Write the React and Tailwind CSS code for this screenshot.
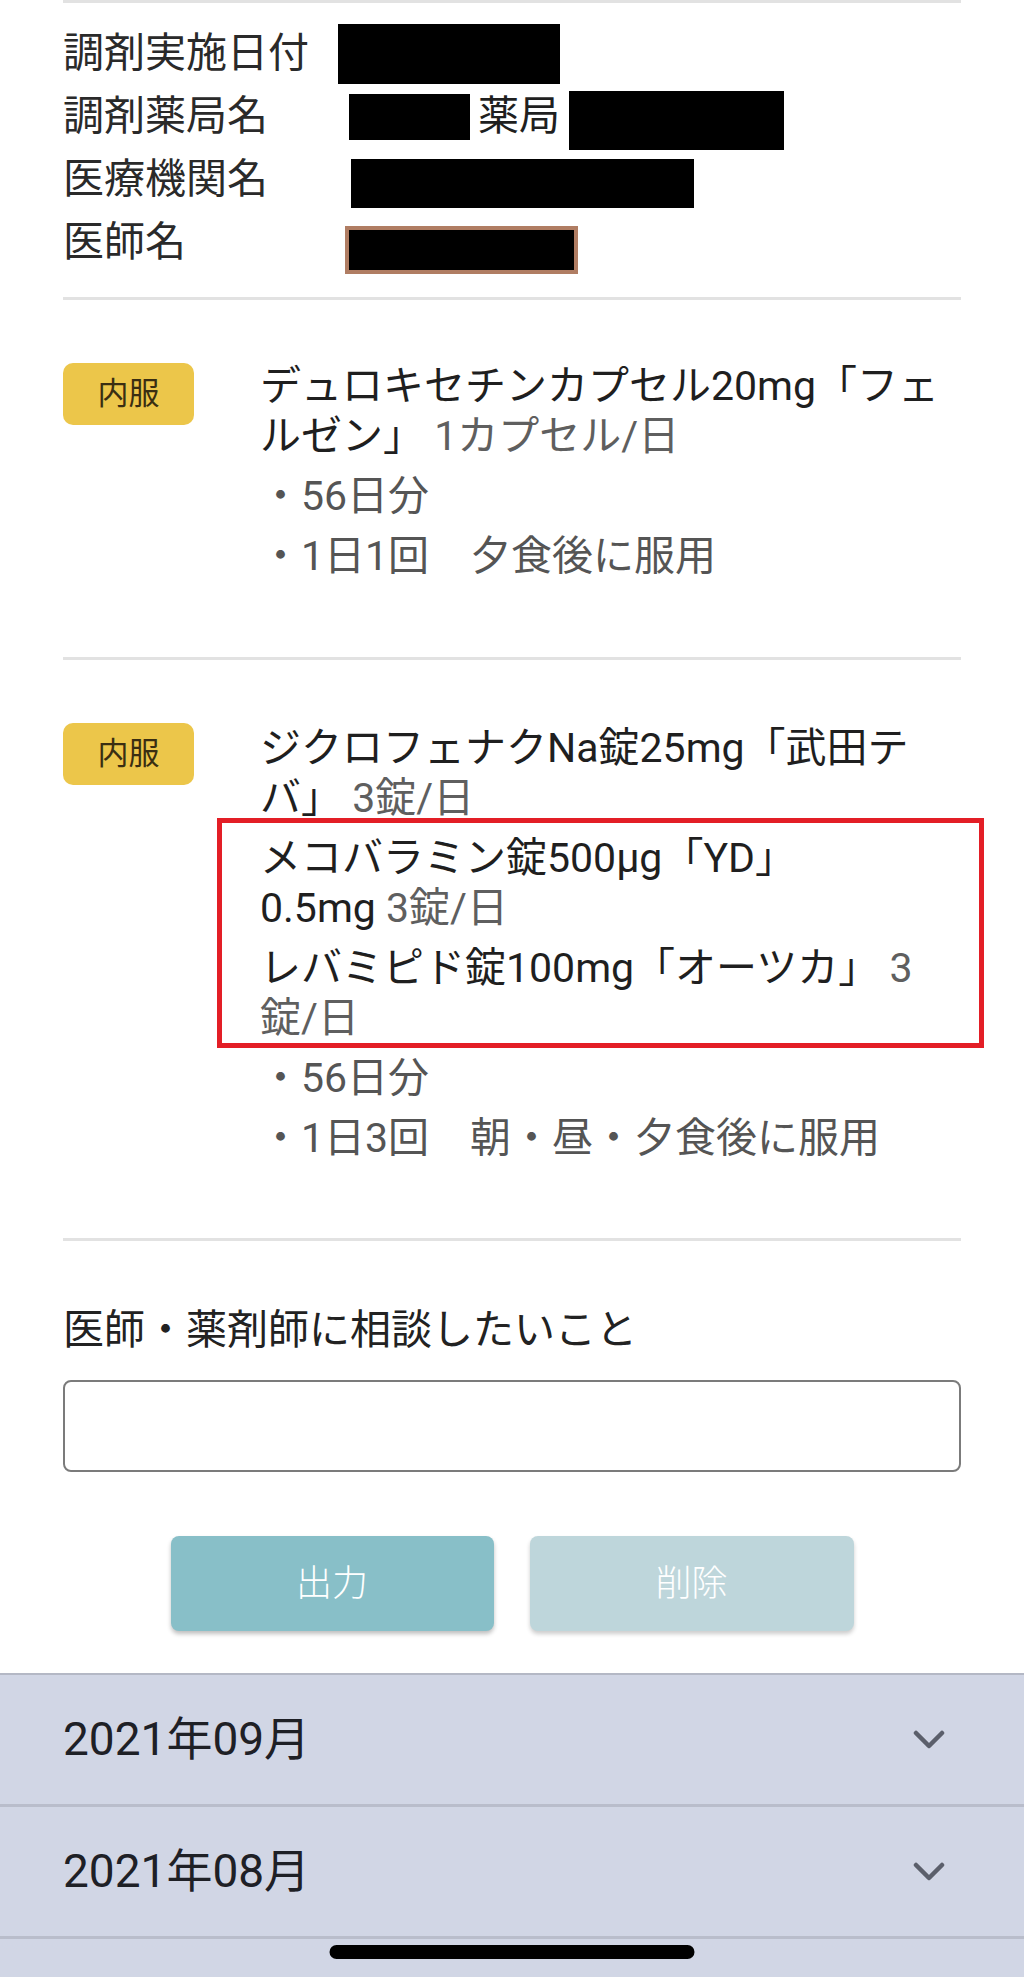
import React from "react";

const Redact = ({ className = "" }) => <span className={`block shrink-0 bg-black ${className}`} />;

const InfoRow = ({ label, children }) => (
  <div className="flex h-[63px] items-center">
    <div className="w-[286px] shrink-0 text-[#2a2a2a]">{label}</div>
    <div className="flex items-center">{children}</div>
  </div>
);

const Badge = () => (
  <div className="flex h-[62px] w-[131px] shrink-0 items-center justify-center rounded-[10px] bg-[#ecc64a] text-[31px] text-[#3a2e12]">
    内服
  </div>
);

const Dose = ({ children }) => <span className="text-[#5f5f5f]">{children}</span>;

const Bullet = ({ children }) => <p className="whitespace-nowrap text-[#555555]">・{children}</p>;

const Chevron = () => (
  <svg width="32" height="20" viewBox="0 0 32 20" fill="none">
    <polyline points="3,3 16,16 29,3" stroke="#5b5f6b" strokeWidth="4.5" strokeLinecap="round" strokeLinejoin="round" />
  </svg>
);

export default function App() {
  return (
    <div className="relative min-h-[1977px] w-[1024px] overflow-hidden bg-white font-['Roboto','Noto_Sans_CJK_JP',sans-serif] text-[41px] text-[#1f1f1f]">
      <div className="px-[63px]">
        {/* dispensing info */}
        <section className="border-t-[3px] border-[#e2e2e2] pb-[23px] pt-[19px]">
          <InfoRow label="調剤実施日付">
            <Redact className="-ml-[11px] h-[60px] w-[222px]" />
          </InfoRow>
          <InfoRow label="調剤薬局名">
            <Redact className="h-[46px] w-[121px]" />
            <span className="ml-[8px]">薬局</span>
            <Redact className="ml-[9px] mt-[7px] h-[59px] w-[215px]" />
          </InfoRow>
          <InfoRow label="医療機関名">
            <Redact className="ml-[2px] mt-[7px] h-[49px] w-[343px]" />
          </InfoRow>
          <InfoRow label="医師名">
            <span className="-ml-[4px] mt-[14px] block h-[48px] w-[233px] border-4 border-[#b07d63] bg-black" />
          </InfoRow>
        </section>

        {/* medicine 1 */}
        <section className="flex border-t-[3px] border-[#e2e2e2] pb-[76px] pt-[61px]">
          <div className="mt-[2px]">
            <Badge />
          </div>
          <div className="ml-[66px] flex flex-1 flex-col gap-[10px] leading-[50px]">
            <p className="whitespace-nowrap">
              デュロキセチンカプセル20mg「フェ
              <br />
              ルゼン」 <Dose>1カプセル/日</Dose>
            </p>
            <Bullet>56日分</Bullet>
            <Bullet>1日1回　夕食後に服用</Bullet>
          </div>
        </section>

        {/* medicine 2 */}
        <section className="flex border-t-[3px] border-[#e2e2e2] pb-[75px] pt-[63px]">
          <Badge />
          <div className="ml-[66px] flex flex-1 flex-col gap-[10px] leading-[50px]">
            <p className="whitespace-nowrap">
              ジクロフェナクNa錠25mg「武田テ
              <br />
              バ」 <Dose>3錠/日</Dose>
            </p>
            <div className="relative flex flex-col gap-[10px]">
              <div className="pointer-events-none absolute -bottom-[5px] -left-[43px] -right-[23px] -top-[15px] border-[5px] border-[#e31e26]" />
              <p className="whitespace-nowrap">
                メコバラミン錠500μg「YD」
                <br />
                0.5mg <Dose>3錠/日</Dose>
              </p>
              <p className="whitespace-nowrap">
                レバミピド錠100mg「オーツカ」 <Dose>3</Dose>
                <br />
                <Dose>錠/日</Dose>
              </p>
            </div>
            <Bullet>56日分</Bullet>
            <Bullet>1日3回　朝・昼・夕食後に服用</Bullet>
          </div>
        </section>

        {/* consultation */}
        <section className="border-t-[3px] border-[#e2e2e2] pb-[42px] pt-[64px]">
          <p className="leading-[50px] text-[#222222]">医師・薬剤師に相談したいこと</p>
          <textarea className="mt-[25px] block h-[92px] w-full resize-none rounded-[8px] border-2 border-[#7b7b7b] bg-white outline-none" />
          <div className="mt-[64px] flex justify-center gap-[36px]">
            <button
              type="button"
              className="h-[95px] w-[323px] rounded-[8px] bg-[#88bfc8] text-[36px] font-light text-white shadow-[0_3px_4px_rgba(0,0,0,0.25)]"
            >
              出力
            </button>
            <button
              type="button"
              className="h-[95px] w-[324px] rounded-[8px] bg-[#bed6db] text-[36px] font-light text-white shadow-[0_3px_4px_rgba(0,0,0,0.2)]"
            >
              削除
            </button>
          </div>
        </section>
      </div>

      {/* history accordion */}
      <div className="border-t-2 border-[#b4b8c5] bg-[#d1d6e5]">
        {["2021年09月", "2021年08月"].map((month) => (
          <div
            key={month}
            className="flex h-[132px] items-center justify-between border-b-[3px] border-[#b9bdcb] pl-[63px] pr-[79px] text-[46px] text-[#1e2026]"
          >
            <span>{month}</span>
            <Chevron />
          </div>
        ))}
        <div className="h-[40px]" />
      </div>

      <div className="absolute bottom-[20px] left-1/2 h-[14px] w-[365px] -translate-x-1/2 rounded-full bg-black" />
    </div>
  );
}
